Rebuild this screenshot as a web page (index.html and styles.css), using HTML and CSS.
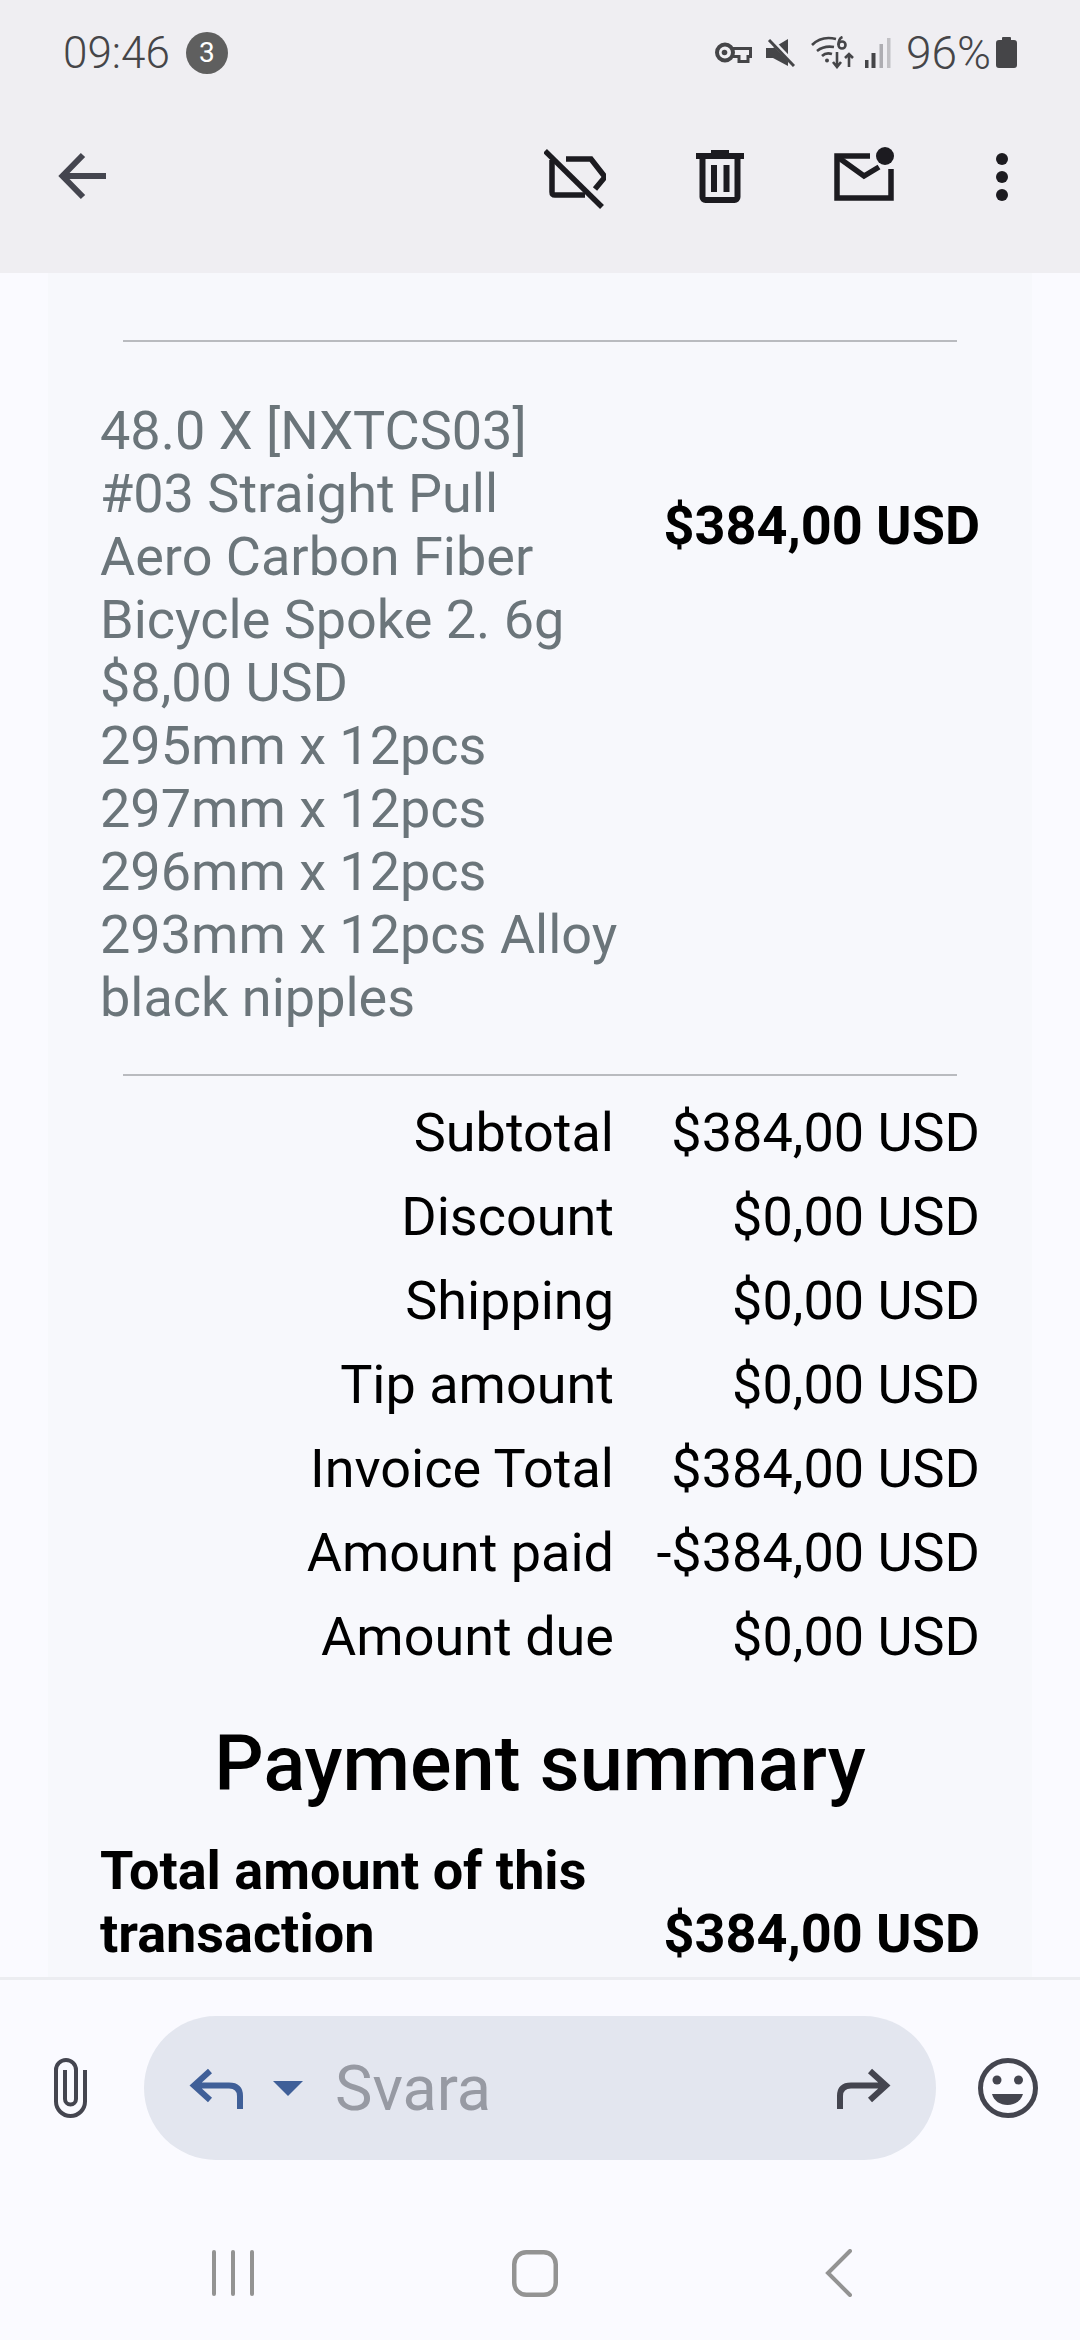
FILE: index.html
```html
<!DOCTYPE html>
<html lang="sv">
<head>
<meta charset="utf-8">
<title>Faktura</title>
<link rel="stylesheet" href="styles.css">
</head>
<body>
<div class="screen">
  <header class="top">
    <div class="status">
      <div class="status-left">
        <span class="time">09:46</span>
        <span class="badge">3</span>
      </div>
      <div class="status-right">
        <svg width="37" height="21" viewBox="0 0 37 21"><circle cx="10" cy="10.500" r="8" fill="none" stroke="#454548" stroke-width="4"/><circle cx="9.500" cy="10.500" r="2.800" fill="#454548"/><path d="M18 6.500h17.500v8H33v5h-9v-5h-6" fill="none" stroke="#454548" stroke-width="3"/></svg>
        <svg class="i-mute" width="29" height="28" viewBox="0 0 29 28"><path d="M0 9h7L22 0v27L7 19H0z" fill="#454548"/><path d="M5 1l24 25" stroke="#efeef2" stroke-width="5"/><path d="M3 1l25 26" stroke="#454548" stroke-width="3"/></svg>
        <svg class="i-wifi" width="44" height="33" viewBox="0 0 44 33" fill="none" stroke="#454548" stroke-width="2.600"><path d="M1 9C8 2 17 1 25 3"/><path d="M6 15c5-4 11-5 17-4"/><path d="M11 20c3-3 7-3 10-2"/><circle cx="16" cy="24.500" r="2" fill="#454548" stroke="none"/><circle cx="31" cy="9" r="3.500"/><path d="M27.500 9c0-4 1-7 4-8"/><path d="M26 16v15M22 26l4 5 4-5M38 31V18M34 22l4-4 4 4"/></svg>
        <svg class="i-signal" width="27" height="30" viewBox="0 0 27 30"><rect x="1" y="22" width="3.500" height="8" fill="#454548"/><rect x="7.500" y="15" width="4" height="15" fill="#454548"/><rect x="15.500" y="6" width="3.500" height="24" fill="#aeadb2"/><rect x="23" y="0" width="3.500" height="30" fill="#c2c1c5"/></svg>
        <span class="pct">96%</span>
        <svg width="21" height="31" viewBox="0 0 21 31"><path d="M7 0h7a1 1 0 0 1 1 1v2h3a3 3 0 0 1 3 3v22a3 3 0 0 1-3 3H3a3 3 0 0 1-3-3V6a3 3 0 0 1 3-3h3V1a1 1 0 0 1 1-1z" fill="#454548"/></svg>
      </div>
    </div>
    <div class="toolbar">
      <svg width="48" height="62" viewBox="0 0 48 62" fill="none" stroke="#44454f" stroke-width="6"><path d="M25 8L4.500 29 25 50M6 29h42"/></svg>
      <div class="actions">
        <svg width="62" height="62" viewBox="0 0 62 62" fill="none" stroke="#1c1b20" stroke-width="5.500"><path d="M1 4l57 56"/><path d="M22 12h25l14 18-10 12"/><path d="M8 13v32q0 3 3 3h30"/></svg>
        <svg class="a-trash" width="48" height="62" viewBox="0 0 48 62" fill="#1c1b20"><path d="M15 3h18v3h15v6H0V6h15z"/><path d="M6.500 11v39a3 3 0 0 0 3 3h29a3 3 0 0 0 3-3V11" fill="none" stroke="#1c1b20" stroke-width="6"/><rect x="15" y="18" width="6" height="27"/><rect x="27.500" y="18" width="6" height="27"/></svg>
        <svg class="a-mail" width="60" height="62" viewBox="0 0 60 62"><path d="M36 9H3v42h54V22" fill="none" stroke="#1c1b20" stroke-width="5.500"/><path d="M5 11l25 18 15-9" fill="none" stroke="#1c1b20" stroke-width="5.500"/><circle cx="51" cy="9" r="9" fill="#1c1b20"/></svg>
        <svg class="a-more" width="12" height="62" viewBox="0 0 12 62" fill="#1c1b20"><circle cx="6" cy="12" r="6"/><circle cx="6" cy="30" r="6"/><circle cx="6" cy="48" r="6"/></svg>
      </div>
    </div>
  </header>
  <main class="mail">
    <div class="card">
      <hr class="rule first">
      <div class="item">
        <div class="item-desc">48.0 X [NXTCS03] #03 Straight Pull Aero Carbon Fiber Bicycle Spoke 2. 6g<br>$8,00 USD<br>295mm x 12pcs<br>297mm x 12pcs<br>296mm x 12pcs<br>293mm x 12pcs Alloy black nipples</div>
        <div class="item-price">$384,00 USD</div>
      </div>
      <hr class="rule">
      <div class="totals">
        <div class="tl">Subtotal</div><div class="tv">$384,00 USD</div>
        <div class="tl">Discount</div><div class="tv">$0,00 USD</div>
        <div class="tl">Shipping</div><div class="tv">$0,00 USD</div>
        <div class="tl">Tip amount</div><div class="tv">$0,00 USD</div>
        <div class="tl">Invoice Total</div><div class="tv">$384,00 USD</div>
        <div class="tl">Amount paid</div><div class="tv">-$384,00 USD</div>
        <div class="tl">Amount due</div><div class="tv">$0,00 USD</div>
      </div>
      <h2 class="summary">Payment summary</h2>
      <div class="txn">
        <div class="txn-label">Total amount of this transaction</div>
        <div class="txn-val">$384,00 USD</div>
      </div>
    </div>
  </main>
  <footer class="bottom">
    <div class="reply-row">
      <svg width="33" height="60" viewBox="0 0 33 60" fill="none" stroke="#44454f" stroke-width="4"><path d="M31 12v31.500a14.500 14.500 0 0 1-29 0V12a10 10 0 0 1 20 0v29a5.500 5.500 0 0 1-11 0V12"/></svg>
      <div class="pill">
        <div class="pill-left">
          <svg width="54" height="42" viewBox="0 0 54 42" fill="none" stroke="#3f5f98" stroke-width="6"><path d="M21 4L5 18.500 21 33M6 18.500h34Q51 18.500 51 29v13"/></svg>
          <svg class="caret" width="30" height="15" viewBox="0 0 30 15"><path d="M0 0h30L15 15z" fill="#3f5f98"/></svg>
          <span class="svara">Svara</span>
        </div>
        <svg width="54" height="42" viewBox="0 0 54 42" fill="none" stroke="#44454f" stroke-width="6"><path d="M33 4l16 14.500L33 33M48 18.500H14Q3 18.500 3 29v13"/></svg>
      </div>
      <svg width="60" height="60" viewBox="0 0 60 60"><circle cx="30" cy="30" r="27.500" fill="none" stroke="#44454f" stroke-width="5"/><circle cx="19" cy="22" r="4.500" fill="#44454f"/><circle cx="40.500" cy="22" r="4.500" fill="#44454f"/><path d="M14 36h31c-2 7-8 11-15.500 11S16 43 14 36z" fill="#44454f"/></svg>
    </div>
    <nav class="navbar">
      <svg width="43" height="46" viewBox="0 0 43 46" fill="#939393"><rect x="0" y="0" width="4" height="46" rx="2"/><rect x="19" y="0" width="4" height="46" rx="2"/><rect x="38" y="0" width="4" height="46" rx="2"/></svg>
      <svg class="n-home" width="46" height="47" viewBox="0 0 46 47" fill="none" stroke="#939393" stroke-width="4.500"><rect x="2.250" y="2.250" width="41.500" height="42.500" rx="12"/></svg>
      <svg class="n-back" width="27" height="48" viewBox="0 0 27 48" fill="none" stroke="#939393" stroke-width="4" stroke-linecap="round"><path d="M25 2L3 24l22 22"/></svg>
    </nav>
  </footer>
</div>
</body>
</html>
```

FILE: styles.css
```css
* { box-sizing: border-box; margin: 0; padding: 0; }
html, body { width: 1080px; height: 2340px; background: #fafaff; font-family: Roboto, "Liberation Sans", sans-serif; overflow: hidden; }
.screen { width: 1080px; height: 2340px; display: flex; flex-direction: column; }
svg { display: block; flex: none; }

.top { height: 273px; background: #efeef2; flex: none; }
.status { height: 105px; display: flex; justify-content: space-between; align-items: center; padding: 0 63px; }
.status-left, .status-right { display: flex; align-items: center; }
.time { font-size: 44px; font-weight: 300; color: #454548; }
.badge { width: 42px; height: 42px; border-radius: 50%; background: #5f5f5f; color: #fff; font-size: 28px; display: flex; align-items: center; justify-content: center; margin-left: 16px; }
.i-mute { margin-left: 14px; }
.i-wifi { margin-left: 16px; }
.i-signal { margin-left: 9px; }
.pct { font-size: 46px; font-weight: 300; color: #454548; margin: 0 5px 0 15px; }

.toolbar { display: flex; align-items: flex-start; justify-content: space-between; padding: 42px 72px 0 58px; }
.actions { display: flex; align-items: flex-start; }
.a-trash { margin-left: 90px; }
.a-mail { margin-left: 90px; }
.a-more { margin-left: 102px; }

.mail { flex: 1; min-height: 0; overflow: hidden; padding: 0 48px; }
.card { background: #f7f8fc; height: 100%; padding: 67px 52px 0; overflow: hidden; }
.rule { border: 0; height: 2px; background: #b9bbbf; margin: 0 23px; }
.item { display: flex; align-items: flex-start; justify-content: space-between; margin-top: 57px; }
.item-desc { width: 522px; font-size: 54px; line-height: 63px; color: #6b757a; }
.item-price { font-size: 54px; line-height: 63px; font-weight: 700; color: #000; margin-top: 95px; }
.item + .rule { margin-top: 45px; }
.totals { display: grid; grid-template-columns: 1fr 366px; grid-auto-rows: 84px; font-size: 54px; line-height: 84px; color: #000; margin-top: 15px; }
.tl, .tv { text-align: right; white-space: nowrap; }
.summary { font-size: 77.5px; line-height: 100px; font-weight: 500; text-align: center; color: #000; margin-top: 35px; }
.txn { display: flex; justify-content: space-between; align-items: flex-end; font-size: 54px; line-height: 63px; font-weight: 700; color: #000; margin-top: 25px; }
.txn-label { width: 522px; }

.bottom { height: 363px; flex: none; border-top: 3px solid #ecedf1; }
.reply-row { display: flex; align-items: center; padding: 36px 42px 0 54px; }
.pill { width: 792px; height: 144px; border-radius: 72px; background: #e3e6ef; display: flex; align-items: center; justify-content: space-between; padding: 0 45px; margin: 0 42px 0 57px; }
.pill-left { display: flex; align-items: center; }
.caret { margin-left: 30px; }
.svara { font-size: 63px; color: #979aa3; margin-left: 32px; }
.navbar { display: flex; align-items: center; padding-left: 212px; margin-top: 89px; }
.n-home { margin-left: 257px; }
.n-back { margin-left: 267px; }
```
